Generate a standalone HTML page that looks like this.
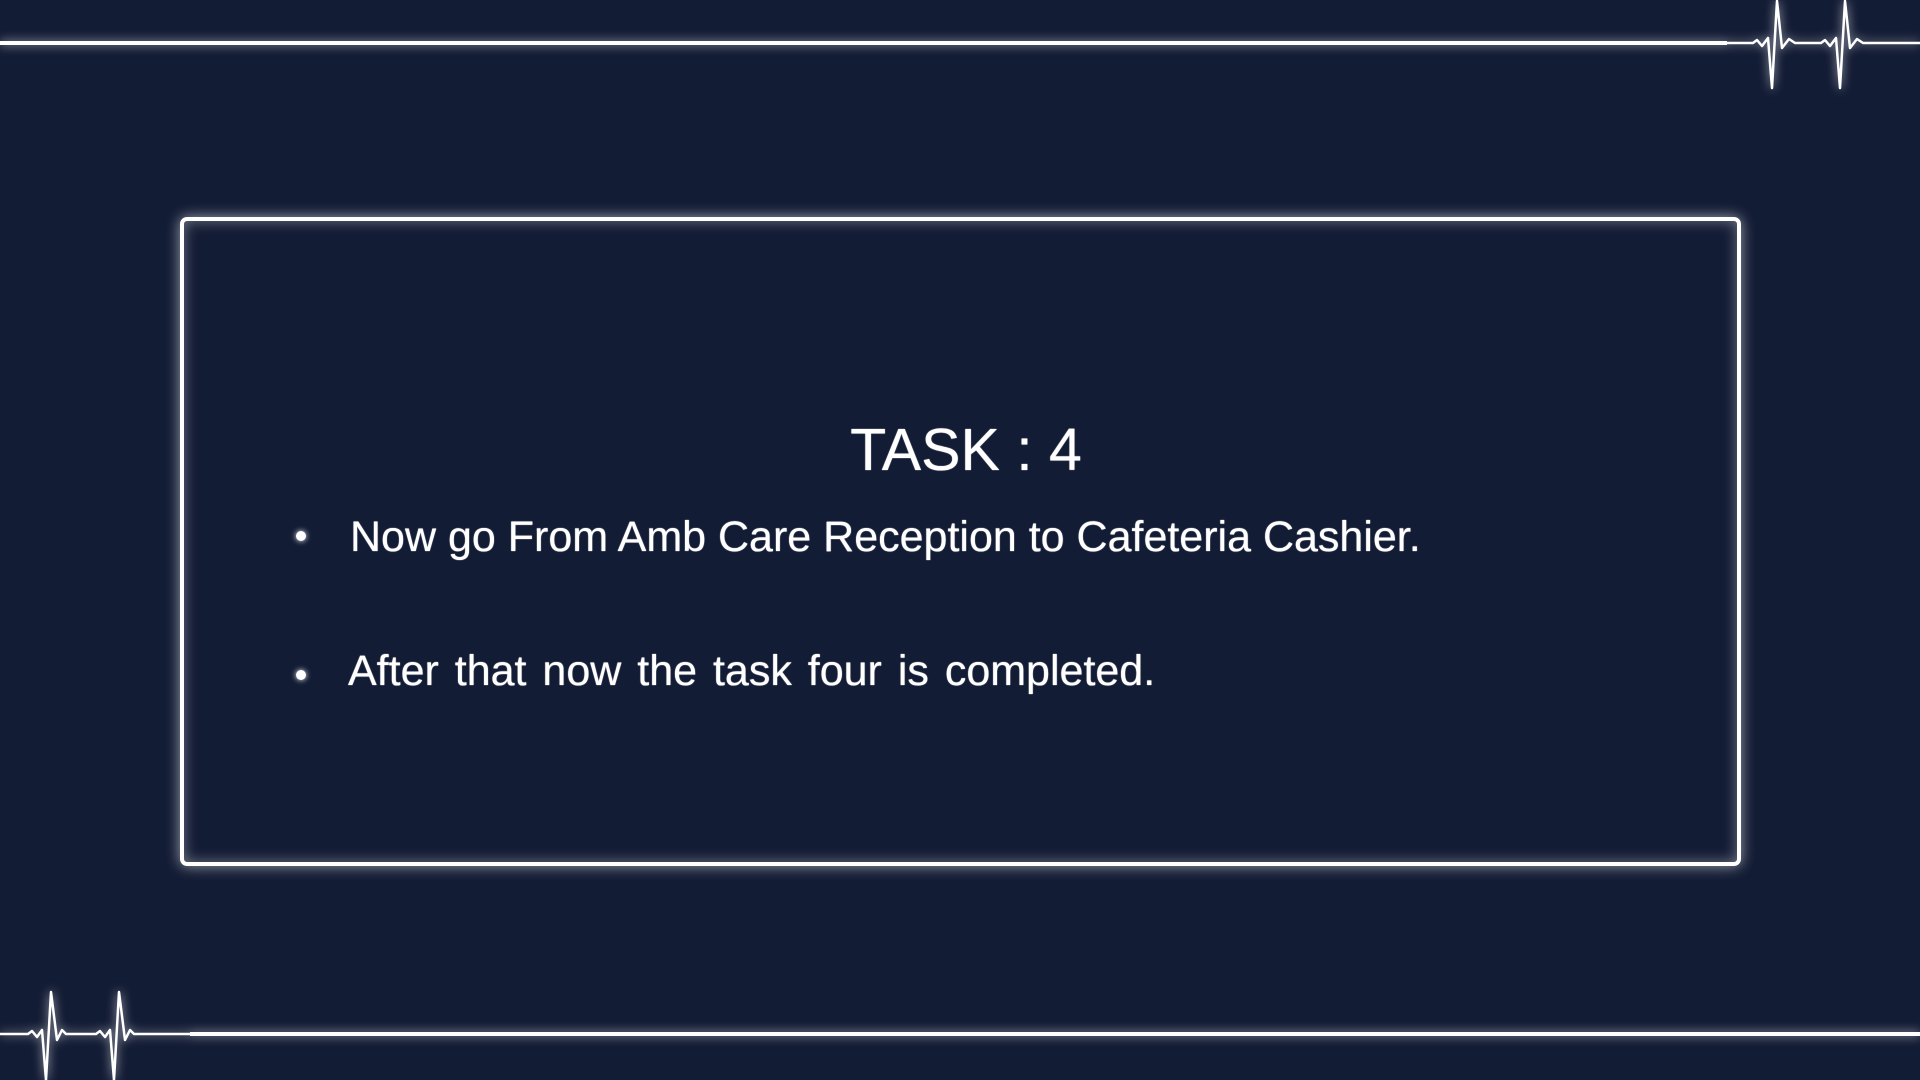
<!DOCTYPE html><html><head><style>
html,body{margin:0;width:1920px;height:1080px;background:#131c35;overflow:hidden;font-family:"Liberation Sans",sans-serif;color:#fff}
.box{position:absolute;left:180px;top:217px;width:1553px;height:641px;border:4px solid #fff;border-radius:7px;box-shadow:0 0 14px rgba(255,255,255,.6),inset 0 0 14px rgba(255,255,255,.4)}
.t{position:absolute;white-space:nowrap;text-shadow:0 0 1px #fff}
.dot{position:absolute;width:10px;height:10px;border-radius:50%;background:#fff;box-shadow:0 0 6px #fff}
</style></head><body>
<svg width="1920" height="1080" style="position:absolute;left:0;top:0" fill="none" stroke="#fff" stroke-linejoin="round">
<defs><filter id="g" x="-20%" y="-50%" width="140%" height="200%"><feGaussianBlur stdDeviation="5"/></filter></defs>
<g id="lines">
<path d="M0 43H1727" stroke-width="4"/>
<path d="M1727 43H1753L1757 40L1762 46L1768 38L1772 88L1777 1L1782 48L1789 39L1795 43H1821L1825 40L1830 46L1836 38L1840 88L1845 1L1850 48L1857 39L1863 43H1920" stroke-width="2.5"/>
<path d="M190 1034H1920" stroke-width="4"/>
<path d="M0 1034H28L32 1031L37 1037L42 1030L46 1080L51 992L57 1040L62 1030L66 1034H96L100 1031L105 1037L110 1030L114 1080L119 992L125 1040L130 1030L134 1034H190" stroke-width="2.5"/>
</g>
<use href="#lines" filter="url(#g)" opacity=".7"/>
</svg>
<div class="box"></div>
<div class="t" style="left:0;width:1932px;text-align:center;top:416px;font-size:59px">TASK : 4</div>
<div class="dot" style="left:296px;top:531px"></div>
<div class="t" style="left:350px;top:513px;font-size:43px">Now go From Amb Care Reception to Cafeteria Cashier.</div>
<div class="dot" style="left:296px;top:670px"></div>
<div class="t" style="left:348px;top:647px;font-size:43px;word-spacing:4px">After that now the task four is completed.</div>
</body></html>
